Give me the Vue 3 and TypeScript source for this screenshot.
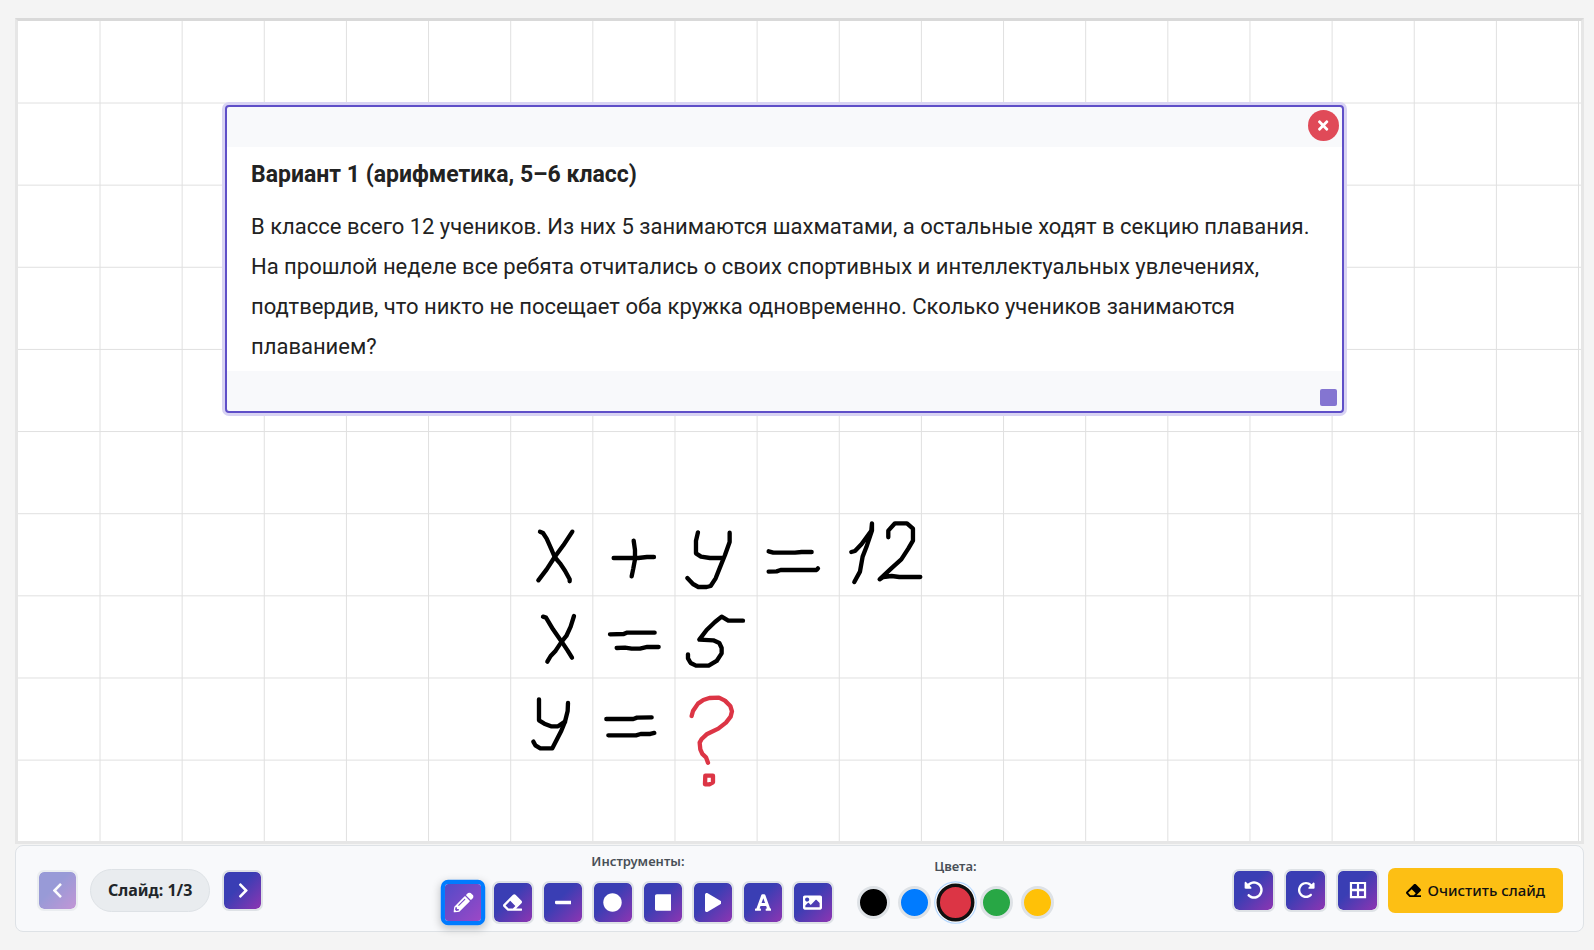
<script setup lang="ts">
import { ref } from 'vue'

interface Shape { d: string; box?: string }
interface Tool { id: string; label: string }

const rotate = 'M48.5 224H40c-13.3 0-24-10.7-24-24V72c0-9.7 5.8-18.5 14.8-22.2s19.3-1.7 26.2 5.2L98.6 96.6c87.600-86.500 228.700-86.200 315.800 1c87.500 87.500 87.500 229.300 0 316.800s-229.300 87.500-316.800 0c-12.500-12.500-12.500-32.800 0-45.300s32.800-12.500 45.300 0c62.500 62.500 163.800 62.500 226.300 0s62.500-163.800 0-226.300c-62.200-62.200-162.700-62.500-225.300-1L185 183c6.900 6.900 8.900 17.200 5.200 26.200s-12.500 14.800-22.200 14.800H48.500z'

const icons: Record<string, Shape> = {
  pencil: { d: 'M497.9 142.1l-46.1 46.1c-4.7 4.7-12.3 4.7-17 0l-111-111c-4.7-4.7-4.7-12.3 0-17l46.1-46.1c18.700-18.700 49.100-18.700 67.900 0l60.100 60.100c18.800 18.700 18.800 49.100 0 67.900zM284.200 99.800L21.600 362.400.4 483.900c-2.900 16.400 11.400 30.600 27.800 27.800l121.500-21.300 262.600-262.600c4.700-4.700 4.700-12.300 0-17l-111-111c-4.800-4.700-12.400-4.700-17.100 0zM124.100 339.900c-5.500-5.500-5.500-14.300 0-19.800l154-154c5.500-5.500 14.300-5.500 19.800 0s5.500 14.300 0 19.800l-154 154c-5.500 5.500-14.300 5.500-19.800 0zM88 424h48v36.300l-64.500 11.300-31.100-31.100L51.700 376H88v48z' },
  eraser: { d: 'M497.941 273.941c18.745-18.745 18.745-49.137 0-67.882l-160-160c-18.745-18.745-49.136-18.746-67.883 0l-256 256c-18.745 18.745-18.745 49.137 0 67.882l96 96A48.004 48.004 0 0 0 144 480h356c6.627 0 12-5.373 12-12v-40c0-6.627-5.373-12-12-12H355.883l142.058-142.059zm-302.627-62.627l137.373 137.373L265.373 416H150.628l-80-80 124.686-124.686z' },
  line: { d: 'M416 208H32c-17.670 0-32 14.330-32 32v32c0 17.670 14.330 32 32 32h384c17.670 0 32-14.330 32-32v-32c0-17.670-14.330-32-32-32z', box: '0 0 448 512' },
  circle: { d: 'M256 8C119 8 8 119 8 256s111 248 248 248 248-111 248-248S393 8 256 8z' },
  square: { d: 'M400 32H48C21.500 32 0 53.500 0 80v352c0 26.500 21.500 48 48 48h352c26.500 0 48-21.500 48-48V80c0-26.500-21.500-48-48-48z', box: '0 0 448 512' },
  play: { d: 'M424.400 214.700L72.400 6.600C43.800-10.300 0 6.100 0 47.900V464c0 37.500 40.700 60.100 72.400 41.300l352-208c31.400-18.500 31.500-64.100 0-82.600z', box: '0 0 448 512' },
  text: { d: 'M432 416h-23.410L277.880 53.690A32 32 0 0 0 247.580 32h-47.160a32 32 0 0 0-30.300 21.690L39.410 416H16a16 16 0 0 0-16 16v32a16 16 0 0 0 16 16h128a16 16 0 0 0 16-16v-32a16 16 0 0 0-16-16h-19.580l23.300-64h152.560l23.300 64H304a16 16 0 0 0-16 16v32a16 16 0 0 0 16 16h128a16 16 0 0 0 16-16v-32a16 16 0 0 0-16-16zM176.850 272L224 142.510 271.150 272z', box: '0 0 448 512' },
  image: { d: 'M464 448H48c-26.510 0-48-21.490-48-48V112c0-26.510 21.490-48 48-48h416c26.510 0 48 21.490 48 48v288c0 26.510-21.490 48-48 48zM112 120c-30.928 0-56 25.072-56 56s25.072 56 56 56 56-25.072 56-56-25.072-56-56-56zM64 384h384V272l-87.515-87.515c-4.686-4.686-12.284-4.686-16.971 0L208 320l-55.515-55.515c-4.686-4.686-12.284-4.686-16.971 0L64 336v48z' },
  undo: { d: rotate },
  redo: { d: rotate, box: '-24 -24 560 560' },
  grid: { d: 'M48 48h416v416H48zM104 104v120h124V104zm180 0v120h124V104zM104 288v120h124V288zm180 0v120h124V288z' },
  left: { d: 'M34.520 239.030L228.870 44.690c9.370-9.370 24.570-9.370 33.940 0l22.670 22.670c9.360 9.360 9.370 24.520.04 33.900L131.490 256l154.020 154.750c9.340 9.380 9.320 24.540-.04 33.900l-22.670 22.670c-9.370 9.370-24.570 9.370-33.940 0L34.520 272.970c-9.370-9.370-9.370-24.570 0-33.940z', box: '0 0 320 512' },
  right: { d: 'M285.476 272.971L91.132 467.314c-9.373 9.373-24.569 9.373-33.941 0l-22.667-22.667c-9.357-9.357-9.375-24.522-.04-33.901L188.505 256 34.484 101.255c-9.335-9.379-9.317-24.544.04-33.901l22.667-22.667c9.373-9.373 24.569-9.373 33.941 0L285.475 239.030c9.373 9.372 9.373 24.568.001 33.941z', box: '0 0 320 512' },
  close: { d: 'M242.720 256l100.070-100.070c12.280-12.280 12.280-32.190 0-44.480l-22.240-22.240c-12.280-12.280-32.190-12.280-44.480 0L176 189.280 75.930 89.210c-12.280-12.280-32.190-12.280-44.480 0L9.210 111.450c-12.280 12.280-12.280 32.190 0 44.480L109.280 256 9.210 356.070c-12.280 12.280-12.280 32.190 0 44.480l22.240 22.240c12.280 12.280 32.200 12.280 44.480 0L176 322.720l100.070 100.070c12.280 12.280 32.200 12.280 44.480 0l22.240-22.240c12.280-12.280 12.280-32.190 0-44.480L242.720 256z', box: '0 0 352 512' },
}

const tools: Tool[] = [
  { id: 'pencil', label: 'Карандаш' },
  { id: 'eraser', label: 'Ластик' },
  { id: 'line', label: 'Линия' },
  { id: 'circle', label: 'Круг' },
  { id: 'square', label: 'Прямоугольник' },
  { id: 'play', label: 'Треугольник' },
  { id: 'text', label: 'Текст' },
  { id: 'image', label: 'Изображение' },
]

const actions: Tool[] = [
  { id: 'undo', label: 'Отменить' },
  { id: 'redo', label: 'Повторить' },
  { id: 'grid', label: 'Сетка' },
]

const colors = ['black', 'blue', 'red', 'green', 'yellow']

const activeTool = ref('pencil')
const activeColor = ref('red')
const slide = ref(1)
const total = 3
const showTask = ref(true)

const step = 82.14
const columns = Array.from({ length: 19 }, (_, i) => 82 + i * step)
const rows = Array.from({ length: 9 }, (_, i) => 82 + i * step)

const inkStrokes = [
  'M90 95L99 99L110 116L125 150L134 171L150 190L165 212L179 238V244',
  'M187 95L160 136L134 171L110 208L85 241',
  'M371 122L375 150V178L370 205L365 229',
  'M311 174H385L411 171H432',
  'M564 97L558 122V160L573 170L600 174H636',
  'M659 98V126L645 165L630 202L617 235L602 258L590 261H565L549 252L532 234',
  'M776 154L790 158H855L875 156H905',
  'M776 215L800 214L812 210H920L924 205',
  'M1024 156L1035 153L1055 132L1084 92L1086 70V92L1069 142L1058 170L1050 215L1033 246',
  'M1135 112V92L1155 70H1191L1209 86V122L1195 146L1174 178L1144 205L1109 238L1120 231L1145 228L1168 231H1231',
  'M99 350L108 353L129 388L155 425L173 452L186 473',
  'M192 348L182 380L169 408L155 425L137 452L122 468L112 485',
  'M300 403L341 402L350 398H434',
  'M320 444L345 443L365 446H390L412 441H446',
  'M699 362H655L635 350L615 366L590 390L568 419L610 421L628 429L635 444V460L620 483L596 497H558L542 489L534 475V463',
  'M87 598V661L103 671L123 679H144L165 665',
  'M174 609L173 633L165 665L154 692L127 745H91L76 736L70 725',
  'M289 657H370L381 653L425 652',
  'M295 706H378L392 702H421L433 699',
]
const redStrokes = [
  'M545 648L549 633L564 611L580 600L598 594L627 593L645 602L661 618L666 634L662 650L648 668L625 686L590 703L575 717L569 728L571 748L577 762L588 772L594 788',
  'M586 827H609V847L598 853H585Z',
]
</script>

<template>
  <main class="app">
    <section class="board" aria-label="Доска">
      <svg class="scene" viewBox="0 0 1563 820" aria-hidden="true">
        <g class="grid-lines">
          <line v-for="x in columns" :key="'c' + x" :x1="x" :x2="x" y1="0" y2="820" />
          <line v-for="y in rows" :key="'r' + y" x1="0" x2="1563" :y1="y" :y2="y" />
        </g>
        <g class="ink" transform="translate(492 479) scale(0.3333)">
          <path v-for="d in inkStrokes" :key="d" :d="d" />
          <path v-for="d in redStrokes" :key="d" :d="d" class="red-ink" />
        </g>
      </svg>

      <article v-if="showTask" class="task">
        <div class="sheet">
          <h1>Вариант 1 (арифметика, 5–6 класс)</h1>
          <p>
            В классе всего 12 учеников. Из них 5 занимаются шахматами, а остальные ходят в секцию плавания.<br />
            На прошлой неделе все ребята отчитались о своих спортивных и интеллектуальных увлечениях,<br />
            подтвердив, что никто не посещает оба кружка одновременно. Сколько учеников занимаются<br />
            плаванием?
          </p>
        </div>
        <button class="close" type="button" aria-label="Удалить" @click="showTask = false">
          <svg :viewBox="icons.close.box"><path :d="icons.close.d" /></svg>
        </button>
        <span class="resize"></span>
      </article>
    </section>

    <footer class="toolbar">
      <nav class="slides" aria-label="Слайды">
        <button class="btn small" type="button" aria-label="Предыдущий слайд" :disabled="slide === 1" @click="slide--">
          <svg :viewBox="icons.left.box"><path :d="icons.left.d" /></svg>
        </button>
        <span class="counter">Слайд: {{ slide }}/{{ total }}</span>
        <button class="btn small" type="button" aria-label="Следующий слайд" :disabled="slide === total" @click="slide++">
          <svg :viewBox="icons.right.box"><path :d="icons.right.d" /></svg>
        </button>
      </nav>

      <div class="center">
        <div class="group" role="group" aria-labelledby="tools-label">
          <span id="tools-label" class="label">Инструменты:</span>
          <div class="row">
            <button
              v-for="t in tools"
              :key="t.id"
              type="button"
              class="btn"
              :class="{ active: t.id === activeTool }"
              :aria-label="t.label"
              :aria-pressed="t.id === activeTool"
              @click="activeTool = t.id"
            >
              <svg :viewBox="icons[t.id].box ?? '0 0 512 512'"><path :d="icons[t.id].d" fill-rule="evenodd" /></svg>
            </button>
          </div>
        </div>
        <div class="group" role="group" aria-labelledby="colors-label">
          <span id="colors-label" class="label">Цвета:</span>
          <div class="row">
            <button
              v-for="c in colors"
              :key="c"
              type="button"
              class="swatch"
              :class="[c, { chosen: c === activeColor }]"
              :aria-label="c"
              :aria-pressed="c === activeColor"
              @click="activeColor = c"
            ></button>
          </div>
        </div>
      </div>

      <div class="actions">
        <button v-for="a in actions" :key="a.id" class="btn" :class="a.id" type="button" :aria-label="a.label">
          <svg :viewBox="icons[a.id].box ?? '0 0 512 512'"><path :d="icons[a.id].d" fill-rule="evenodd" /></svg>
        </button>
        <button class="clear" type="button">
          <svg viewBox="0 0 512 512"><path :d="icons.eraser.d" fill-rule="evenodd" /></svg>
          Очистить слайд
        </button>
      </div>
    </footer>
  </main>
</template>

<style>
body {
  background: #f4f4f4;
}
</style>

<style scoped>
.app {
  box-sizing: border-box;
  padding: 18px 10px 18px 15px;
  font-family: 'Noto Sans', 'Open Sans', sans-serif;
  color: #212529;
}
.board {
  position: relative;
  border: 3px solid #e6e6e6;
  border-top-color: #d9d9d9;
  background: #fff;
}
.scene {
  display: block;
  width: 100%;
}
.grid-lines {
  stroke: #e0e0e0;
  stroke-width: 1;
}
.ink {
  fill: none;
  stroke: #000;
  stroke-width: 13;
  stroke-linecap: round;
  stroke-linejoin: round;
}
.red-ink {
  stroke: #dc3545;
}
.task {
  position: absolute;
  top: 84px;
  left: 207px;
  right: 237px;
  padding: 40px 0;
  border: 2px solid #5f4fc8;
  border-radius: 4px;
  box-shadow: 0 0 0 3px #d8d3f3;
  background: #f8f9fb;
}
.sheet {
  padding: 12px 24px 4px;
  background: #fff;
  color: #222;
  font-family: Roboto, 'Noto Sans', sans-serif;
}
h1 {
  margin: 0 0 16px;
  font-size: 23px;
  font-weight: 700;
  line-height: 32px;
}
p {
  margin: 0;
  font-size: 22px;
  line-height: 40px;
  white-space: nowrap;
}
.close {
  position: absolute;
  top: 3px;
  right: 3px;
  display: flex;
  align-items: center;
  justify-content: center;
  width: 31px;
  height: 31px;
  padding: 0;
  border: 0;
  border-radius: 50%;
  background: #e04a58;
}
.close svg {
  height: 15px;
  fill: #fff;
}
.resize {
  position: absolute;
  right: 5px;
  bottom: 5px;
  width: 17px;
  height: 17px;
  border-radius: 2px;
  background: #8475d1;
}
.toolbar {
  display: flex;
  align-items: center;
  justify-content: space-between;
  box-sizing: border-box;
  min-height: 87px;
  margin-top: 1px;
  padding: 3px 20px 0 21px;
  border: 1px solid #dee2e6;
  border-radius: 8px;
  background: #f8f9fb;
}
.slides {
  display: flex;
  align-items: center;
  gap: 12px;
}
.counter {
  padding: 0 17px;
  border: 1px solid #dee2e6;
  border-radius: 22px;
  background: #e9ecef;
  font-size: 16px;
  font-weight: 700;
  line-height: 41px;
}
.center {
  display: flex;
  align-items: center;
  gap: 23px;
  padding-bottom: 5px;
}
.group {
  display: flex;
  flex-direction: column;
  align-items: center;
  gap: 10px;
}
.label {
  color: #495057;
  font-size: 13px;
  font-weight: 600;
  line-height: 19px;
}
.row,
.actions {
  display: flex;
  align-items: center;
  gap: 8px;
}
.actions {
  gap: 9px;
}
.btn {
  display: flex;
  align-items: center;
  justify-content: center;
  box-sizing: border-box;
  width: 43px;
  height: 43px;
  padding: 0;
  border: 2px solid #dee2e6;
  border-radius: 7px;
  background: linear-gradient(135deg, #3a3eb4 40%, #8e35b2) padding-box;
}
.row .btn {
  width: 42px;
}
.btn svg {
  height: 19px;
  fill: #fff;
}
.actions .btn svg {
  height: 20px;
}
.btn.redo svg {
  transform: scaleX(-1);
}
.btn.small {
  width: 41px;
  height: 41px;
}
.btn.small svg {
  height: 17px;
}
.btn:disabled {
  opacity: 0.5;
}
.btn.active {
  border: 4px solid #007bff;
  background: linear-gradient(135deg, #534bc8, #9c48c6) padding-box;
  box-shadow: 0 3px 8px rgba(0, 0, 0, 0.22);
  transform: scale(1.06);
}
.swatch {
  box-sizing: border-box;
  width: 33px;
  height: 33px;
  padding: 0;
  border: 3px solid #dee2e6;
  border-radius: 50%;
}
.black {
  background: #000;
}
.blue {
  background: #007bff;
}
.red {
  background: #dc3545;
}
.green {
  background: #28a745;
}
.yellow {
  background: #ffc107;
}
.chosen {
  border-color: #111;
  box-shadow: 0 0 0 1px #fff, 0 0 0 2px #b3d7ff;
  transform: scale(1.15);
}
.clear {
  display: flex;
  align-items: center;
  gap: 6px;
  height: 45px;
  padding: 0 18px;
  border: 0;
  border-radius: 7px;
  background: #fdbf14;
  color: #111;
  font-family: inherit;
  font-size: 15px;
  font-weight: 500;
}
.clear svg {
  height: 15px;
}
</style>
